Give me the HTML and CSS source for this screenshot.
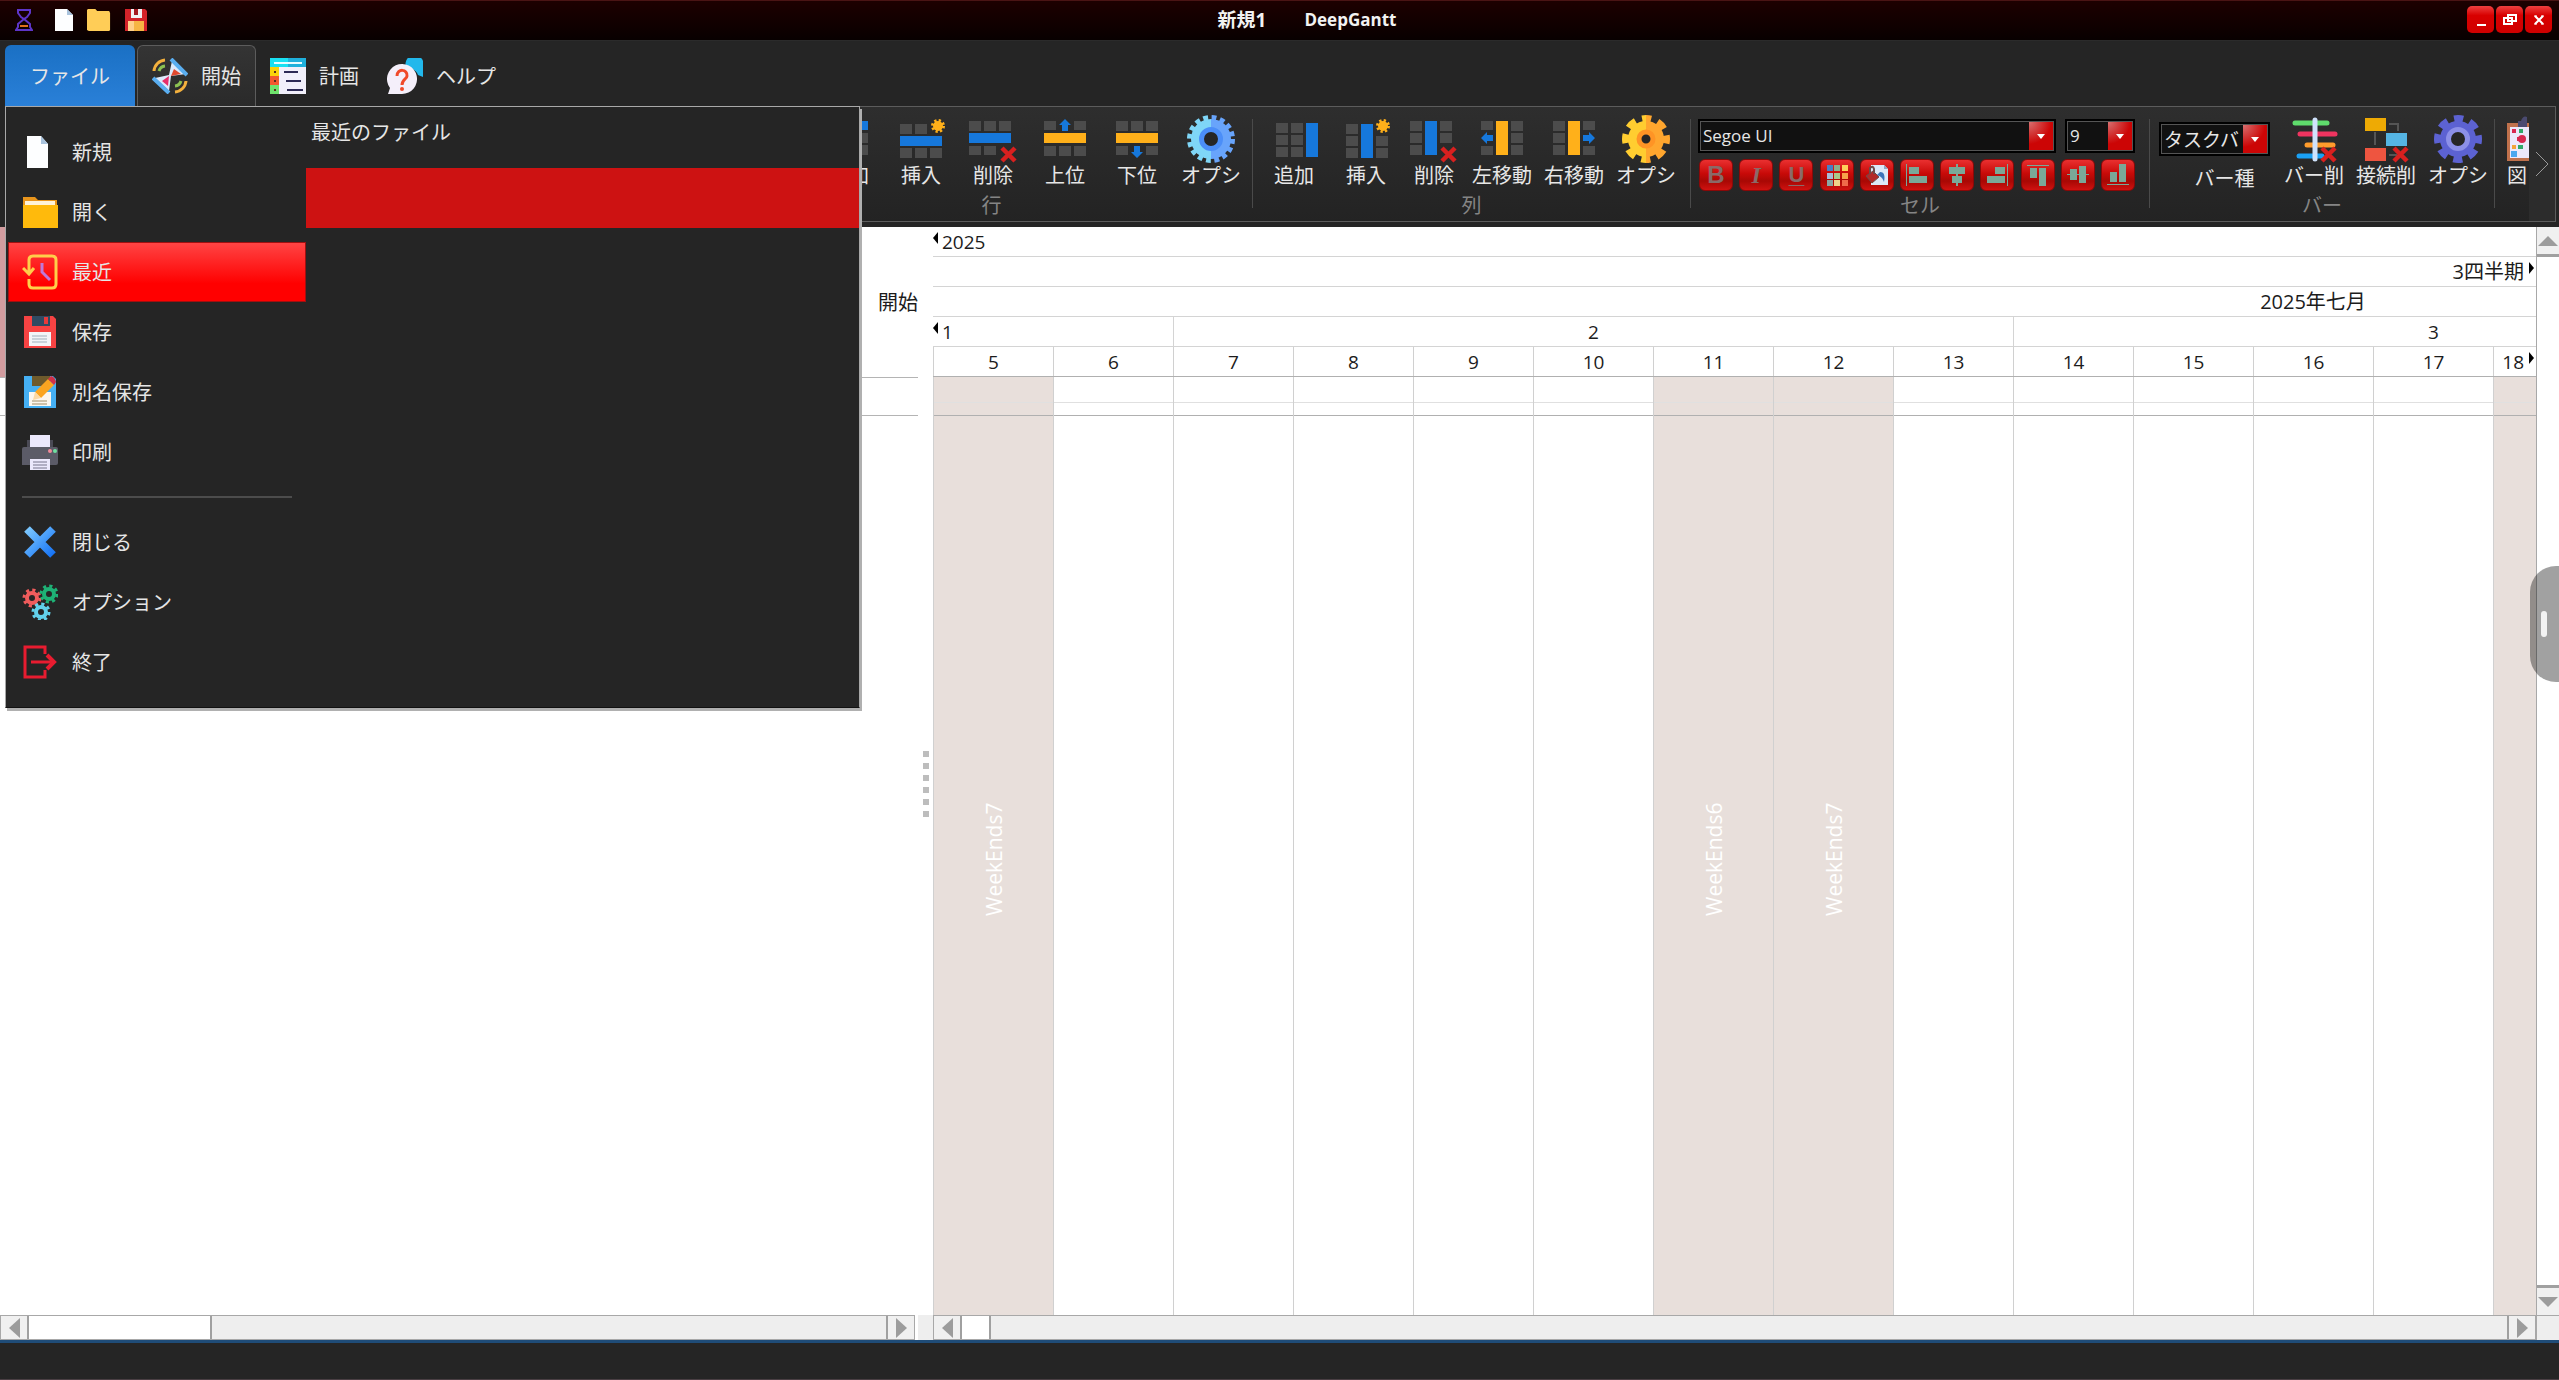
FILE: index.html
```html
<!DOCTYPE html>
<html lang="ja">
<head>
  <meta charset="UTF-8" />
  <meta name="viewport" content="width=device-width, initial-scale=1.0" />
  <title>新規1 DeepGantt</title>
  <link rel="stylesheet" href="styles.css">
</head>
<body>
  <!-- shared icon parts -->
  <svg class="defs" width="0" height="0" aria-hidden="true">
    <defs>
      <linearGradient id="g-blue"><stop offset=".5" stop-color="#7fd6f7"/><stop offset=".5" stop-color="#68a4fb"/></linearGradient>
      <linearGradient id="g-gold"><stop offset=".5" stop-color="#ffcd30"/><stop offset=".5" stop-color="#ffa62e"/></linearGradient>
      <linearGradient id="g-x" x1="0" y1="0" x2="1" y2="1"><stop offset="0" stop-color="#7cc8ff"/><stop offset="1" stop-color="#1673f5"/></linearGradient>
      <linearGradient id="g-cyan"><stop offset=".5" stop-color="#19e0f2"/><stop offset=".5" stop-color="#1fb0dc"/></linearGradient>
      <g id="star"><circle cx="7" cy="7" r="5" fill="#ffb01a"/><circle cx="7" cy="7" r="5.5" fill="none" stroke="#ffb01a" stroke-width="3" stroke-dasharray="2.2 2.12"/></g>
      <path id="cross" d="M2 2 15 15M15 2 2 15" stroke="#d8201f" stroke-width="4.5" fill="none"/>
      <path id="arrow" d="M6 0 12 6H9V12H3V6H0Z" fill="#1678dc"/>
      <path id="cells" d="M0 0h12v10H0zM15 0h12v10H15zM30 0h12v10H30z" fill="#4c4c4c"/>
      <path id="cells-v" d="M0 0h12v10H0zM0 12h12v10H0zM0 24h12v10H0z" fill="#4c4c4c"/>
    </defs>
  </svg>

  <header class="titlebar">
    <div class="quick">
      <svg width="18" height="22" viewBox="0 0 18 22" fill="none" stroke="#5d35c8" stroke-width="2"><path d="M3 1H15V4L12 8 9 10 6 8 3 4ZM9 10 15 15V18L17 21H1L3 18V15Z"/><path d="M5 17H13" stroke="#e0701c"/></svg>
      <button aria-label="新規"><svg width="18" height="22" viewBox="0 0 18 22"><path d="M0 0H12L18 6V22H0Z" fill="#fdfeff"/><path d="M12 0 18 6H12Z" fill="#a9c3dd"/></svg></button>
      <button aria-label="開く"><svg width="24" height="22" viewBox="0 0 26 22" preserveAspectRatio="none"><path d="M1 0H9L11 2H24L25 4V21L24 22H2L0 21V1Z" fill="#ffcd57"/></svg></button>
      <button aria-label="保存"><svg width="22" height="22" viewBox="0 0 22 22"><path d="M0 0H20L22 2V22H0Z" fill="#d3232a"/><path d="M6 0H17V9H6Z" fill="#f1f1f4"/><path d="M9 0H13V6H9Z" fill="#a51b22"/><path d="M3 12H19V22H3Z" fill="#f6b544"/><path d="M3 12H9V22H3Z" fill="#ffd08a"/></svg></button>
    </div>
    <h1 class="title"><span class="doc">新規1</span><span>DeepGantt</span></h1>
    <div class="winbtns">
      <button aria-label="最小化"><svg width="14" height="14" viewBox="0 0 14 14"><path d="M3 12H12" stroke="#fff" stroke-width="2"/></svg></button>
      <button aria-label="元に戻す"><svg width="14" height="14" viewBox="0 0 14 14" fill="none" stroke="#fff" stroke-width="2"><path d="M5 2H13V8H5ZM1 5H9V11H1Z"/></svg></button>
      <button aria-label="閉じる"><svg width="14" height="14" viewBox="0 0 14 14"><path d="M3 3 11 11M11 3 3 11" stroke="#fff" stroke-width="2"/><path d="M2 3h3M9 3h3M2 11h3M9 11h3" stroke="#fff" stroke-width="1"/></svg></button>
    </div>
  </header>

  <nav class="tabs">
    <button class="tab tab-file">ファイル</button>
    <button class="tab tab-active">
      <svg width="36" height="36" viewBox="0 0 36 36" fill="none"><g stroke-width="3"><path d="M2 13A12 12 0 0 1 13 2" stroke="#f3b03d"/><path d="M7 13A7 7 0 0 1 13 8" stroke="#8cc152"/><path d="M34 23A12 12 0 0 1 23 34" stroke="#f3b03d"/><path d="M29 23A7 7 0 0 1 23 28" stroke="#8cc152"/></g><path d="M20 3 34 16 19 18 17 33 3 20 17 17Z" fill="#dceafc"/><path d="M22 11 29 16 19 18Z" fill="#e2492f"/><path d="M10 23 17 18 16 28Z" fill="#e62e6b"/><path d="M19 1 35 17M1 20 17 35" stroke="#5aaef0" stroke-width="4"/></svg>
      開始
    </button>
    <button class="tab">
      <svg width="36" height="36" viewBox="0 0 36 36"><path d="M0 0H36V36H0Z" fill="#f1effa"/><path d="M0 0H36V9H0Z" fill="url(#g-cyan)"/><path d="M4 5H32" stroke="#e8fbff" stroke-width="2"/><path d="M0 9H9V18H0Z" fill="#fbd30b"/><path d="M0 18H9V27H0Z" fill="#f2582f"/><path d="M0 27H9V36H0Z" fill="#6fe36d"/><path d="M14 14H28M16 23H31M17 32H33" stroke="#2d2a55" stroke-width="2"/><path d="M4 14H6M4 23H6M4 32H6" stroke="#5a2a20" stroke-width="2"/></svg>
      計画
    </button>
    <button class="tab">
      <svg width="36" height="36" viewBox="0 0 36 36"><path d="M36 19V9A9 9 0 1 0 19 9C24 9 30 13 31 17Z" fill="#22b8ec"/><path d="M1 36 3 30A15 15 0 1 1 15 36Z" fill="#f4effa"/><path d="M10 18C10 10 21 11 20 18 20 21 15 21 15 27" fill="none" stroke="#f04a2a" stroke-width="3"/><circle cx="15" cy="31" r="2" fill="#f04a2a"/></svg>
      ヘルプ
    </button>
  </nav>

  <section class="ribbon">
    <div class="groups">
      <div class="group group-rows">
        <div class="tools">
          <button class="tool"><svg viewBox="0 0 48 48"><path d="M1 6H43V15H1Z" fill="#1678dc"/><use href="#cells" x="1" y="18"/><use href="#cells" x="1" y="30"/></svg>追加</button>
          <button class="tool"><svg viewBox="0 0 48 48"><path d="M3 9H15V19H3ZM18 9H30V19H18Z" fill="#4c4c4c"/><path d="M3 21H45V31H3Z" fill="#1678dc"/><use href="#cells" x="3" y="33"/><use href="#star" x="34" y="4"/></svg>挿入</button>
          <button class="tool"><svg viewBox="0 0 48 48"><use href="#cells" y="6"/><path d="M0 18H42V28H0Z" fill="#1678dc"/><path d="M0 31H12V40H0ZM15 31H27V40H15Z" fill="#4c4c4c"/><use href="#cross" x="31" y="31"/></svg>削除</button>
          <button class="tool"><svg viewBox="0 0 48 48"><path d="M3 6H15V15H3ZM33 6H45V15H33Z" fill="#4c4c4c"/><path d="M3 18H45V28H3Z" fill="#ffb01a"/><use href="#cells" x="3" y="31"/><use href="#arrow" x="18" y="4"/></svg>上位</button>
          <button class="tool"><svg viewBox="0 0 48 48"><use href="#cells" x="3" y="6"/><path d="M3 18H45V28H3Z" fill="#ffb01a"/><path d="M3 31H15V40H3ZM33 31H45V40H33Z" fill="#4c4c4c"/><use href="#arrow" transform="translate(30 43) rotate(180)"/></svg>下位</button>
          <button class="tool tool-wide"><svg viewBox="0 0 48 48" fill="none"><circle cx="24" cy="24" r="20" fill="url(#g-blue)"/><circle cx="24" cy="24" r="21" stroke="url(#g-blue)" stroke-width="6" stroke-dasharray="4.7 3.546"/><circle cx="24" cy="24" r="9.500" fill="#262626" stroke="#4b8ef8" stroke-width="5"/></svg>オプシ</button>
        </div>
        <div class="group-label">行</div>
      </div>
      <div class="sep"></div>

      <div class="group group-cols">
        <div class="tools">
          <button class="tool"><svg viewBox="0 0 48 48"><use href="#cells-v" x="6" y="8"/><use href="#cells-v" x="21" y="8"/><path d="M36 8H48V42H36Z" fill="#1678dc"/></svg>追加</button>
          <button class="tool"><svg viewBox="0 0 48 48"><use href="#cells-v" x="4" y="9"/><path d="M19 9H31V43H19Z" fill="#1678dc"/><path d="M34 21H46V31H34ZM34 33H46V43H34Z" fill="#4c4c4c"/><use href="#star" x="34" y="4"/></svg>挿入</button>
          <button class="tool tool-narrow"><svg viewBox="0 0 48 48"><use href="#cells-v" y="6"/><path d="M15 6H27V40H15Z" fill="#1678dc"/><path d="M30 6H42V16H30ZM30 18H42V28H30Z" fill="#4c4c4c"/><use href="#cross" x="30" y="31"/></svg>削除</button>
          <button class="tool"><svg viewBox="0 0 48 48"><path d="M3 6H15V15H3ZM3 31H15V40H3Z" fill="#4c4c4c"/><path d="M18 6H30V40H18Z" fill="#ffb01a"/><use href="#cells-v" x="33" y="6"/><use href="#arrow" transform="translate(3 29) rotate(-90)"/></svg>左移動</button>
          <button class="tool"><svg viewBox="0 0 48 48"><use href="#cells-v" x="3" y="6"/><path d="M18 6H30V40H18Z" fill="#ffb01a"/><path d="M33 6H45V15H33ZM33 31H45V40H33Z" fill="#4c4c4c"/><use href="#arrow" transform="translate(45 17) rotate(90)"/></svg>右移動</button>
          <button class="tool"><svg viewBox="0 0 48 48" fill="none"><circle cx="24" cy="24" r="18" fill="url(#g-gold)"/><circle cx="24" cy="24" r="20" stroke="url(#g-gold)" stroke-width="8" stroke-dasharray="9 6.708" stroke-dashoffset="4.500"/><circle cx="24" cy="24" r="7" fill="#262626" stroke="#ff9425" stroke-width="5"/></svg>オプシ</button>
        </div>
        <div class="group-label">列</div>
      </div>
      <div class="sep"></div>

      <div class="group group-cell">
        <div class="combos">
          <label class="combo combo-font"><select aria-label="フォント"><option>Segoe UI</option></select><span class="caret"></span></label>
          <label class="combo combo-size"><select aria-label="サイズ"><option>9</option></select><span class="caret"></span></label>
        </div>
        <div class="formats">
          <button class="fmt fmt-b">B</button>
          <button class="fmt fmt-i">I</button>
          <button class="fmt fmt-u">U</button>
          <button class="fmt" aria-label="色"><svg width="24" height="24" viewBox="0 0 24 24"><path d="M2 2h6v6H2z" fill="#4a7fc4"/><path d="M9 2h6v6H9z" fill="#8fb08a"/><path d="M17 2h6v6h-6z" fill="#ffd05a"/><path d="M2 10h6v6H2z" fill="#a9bcd6"/><path d="M9 10h6v6H9z" fill="#a9c98a"/><path d="M17 10h6v6h-6z" fill="#f6a24a"/><path d="M2 17h6v6H2z" fill="#8aa6a4"/><path d="M9 17h6v6H9z" fill="#f0d48a"/><path d="M17 17h6v6h-6z" fill="#ef6a4a"/></svg></button>
          <button class="fmt" aria-label="塗りつぶし"><svg width="24" height="24" viewBox="0 0 24 24"><path d="M6 2H19L23 6V22H6Z" fill="#dce9f7"/><path d="M19 2V6H23" fill="#8fa8c4"/><path d="M15 9C20 9 20 14 19 19 17 13 14 13 12 12Z" fill="#3c74b8"/><path d="M1 13 8 8 14 14 7 20Z" fill="#b22a28" stroke="#6f4a48"/><path d="M5 11V5Q8 2 9 6V11" fill="none" stroke="#6f4a48" stroke-width="2"/></svg></button>
          <button class="fmt" aria-label="左揃え"><svg width="24" height="24" viewBox="0 0 24 24" fill="#7aa898"><path d="M1 1h1v22H1zM4 4h10v7H4zM4 13h18v7H4z"/></svg></button>
          <button class="fmt" aria-label="中央揃え"><svg width="24" height="24" viewBox="0 0 24 24" fill="#7aa898"><path d="M11 1h2v22h-2zM4 4h16v7H4zM7 13h10v7H7z"/></svg></button>
          <button class="fmt" aria-label="右揃え"><svg width="24" height="24" viewBox="0 0 24 24" fill="#7aa898"><path d="M22 1h1v22h-1zM10 4h10v7H10zM2 13h18v7H2z"/></svg></button>
          <button class="fmt" aria-label="上揃え"><svg width="24" height="24" viewBox="0 0 24 24" fill="#7aa898"><path d="M1 2h22v1H1zM4 5h7v10H4zM13 5h7v18h-7z"/></svg></button>
          <button class="fmt" aria-label="上下中央揃え"><svg width="24" height="24" viewBox="0 0 24 24" fill="#7aa898"><path d="M1 11h22v1H1zM4 6h7v11H4zM13 3h7v17h-7z"/></svg></button>
          <button class="fmt" aria-label="下揃え"><svg width="24" height="24" viewBox="0 0 24 24" fill="#7aa898"><path d="M1 21h22v1H1zM4 9h7v10H4zM13 1h7v18h-7z"/></svg></button>
        </div>
        <div class="group-label">セル</div>
      </div>
      <div class="sep"></div>

      <div class="group group-bar">
        <div class="tools">
          <div class="bar-type">
            <div class="combo"><select id="bar-type"><option>タスクバ</option></select><span class="caret"></span></div>
            <label for="bar-type">バー種</label>
          </div>
          <button class="tool"><svg viewBox="0 0 48 48" fill="none" stroke-width="5" stroke-linecap="round"><path d="M5 8H37" stroke="#5fdc6c"/><path d="M10 19H45" stroke="#ef3460"/><path d="M17 30H43" stroke="#ff9c2c"/><path d="M9 41H32" stroke="#1aa0f4"/><path d="M25 5V44" stroke="#cfe2fb"/><use href="#cross" x="30" y="31" stroke-linecap="butt"/></svg>バー削</button>
          <button class="tool"><svg viewBox="0 0 48 48"><path d="M27 9H36V16M13 30V17M27 40H35" fill="none" stroke="#555" stroke-width="2"/><path d="M3 3H24V16H3Z" fill="#eeaa04"/><path d="M24 18H45V31H24Z" fill="#55b5e4"/><path d="M3 33H24V46H3Z" fill="#ee5540"/><use href="#cross" x="30" y="31"/></svg>接続削</button>
          <button class="tool"><svg viewBox="0 0 48 48" fill="none"><circle cx="24" cy="24" r="18" fill="#5c62d2"/><circle cx="24" cy="24" r="20" stroke="#5c62d2" stroke-width="8" stroke-dasharray="9 6.708" stroke-dashoffset="4.500"/><circle cx="24" cy="24" r="9.500" fill="#262626" stroke="#8c90e8" stroke-width="5"/></svg>オプシ</button>
        </div>
        <div class="group-label">バー</div>
      </div>
      <div class="sep"></div>

      <div class="group group-figure">
        <button class="tool"><svg viewBox="0 0 48 48"><path d="M0 8H36V46H0Z" fill="#c0714c"/><path d="M3 12H33V43H3Z" fill="#ece8fa"/><path d="M11 10V6H14Q16 0 20 2V12H11Z" fill="#4a4a70"/><path d="M5 14h4v4H5zM10 22h4v4h-4z" fill="#d92850"/><path d="M12 14h4v4h-4z" fill="#30a868"/><circle cx="15" cy="24" r="4" fill="#d92850"/><path d="M5 30h4v4H5z" fill="#f2a43a"/><path d="M11 30h5v4h-5z" fill="#30a868"/><path d="M4 36h6v6H4z" fill="#4ba7ee"/></svg>図</button>
      </div>
    </div>
    <button class="ribbon-next" aria-label="次へ"><svg width="14" height="26" viewBox="0 0 14 26" fill="none" stroke="#999" stroke-width="1"><path d="M1 1 13 13 1 25"/></svg></button>
  </section>

  <main class="workspace">
    <section class="pane">
      <table class="tasks">
        <thead><tr><th class="col-mark"></th><th class="col-start">開始</th></tr></thead>
        <tbody><tr><td></td><td></td></tr></tbody>
      </table>
      <div class="hscroll">
        <button class="sb-btn" aria-label="左へ"><i class="tri tri-left"></i></button>
        <div class="sb-track"><div class="sb-thumb thumb-pane"></div></div>
        <button class="sb-btn" aria-label="右へ"><i class="tri tri-right"></i></button>
      </div>
    </section>

    <div class="splitter"><i></i><i></i><i></i><i></i><i></i><i></i></div>

    <section class="chart">
      <div class="scale"><svg class="mark" width="5" height="12" viewBox="0 0 5 12"><path d="M5 0V12L0 6Z"/></svg>2025</div>
      <div class="scale scale-quarter">3四半期<svg class="mark" width="5" height="12" viewBox="0 0 5 12"><path d="M0 0V12L5 6Z"/></svg></div>
      <div class="scale"><div class="month">2025年七月</div></div>
      <div class="scale weeks">
        <div class="week-first"><svg class="mark" width="5" height="12" viewBox="0 0 5 12"><path d="M5 0V12L0 6Z"/></svg>1</div>
        <div class="week">2</div>
        <div class="week">3</div>
      </div>
      <div class="scale days">
        <div>5</div><div>6</div><div>7</div><div>8</div><div>9</div><div>10</div><div>11</div><div>12</div><div>13</div><div>14</div><div>15</div><div>16</div><div>17</div><div>18<svg class="mark" width="5" height="12" viewBox="0 0 5 12"><path d="M0 0V12L5 6Z"/></svg></div>
      </div>
      <div class="days grid">
        <div class="off"><span>WeekEnds7</span></div><div></div><div></div><div></div><div></div><div></div>
        <div class="off"><span>WeekEnds6</span></div><div class="off"><span>WeekEnds7</span></div>
        <div></div><div></div><div></div><div></div><div></div><div class="off"></div>
      </div>
      <div class="hscroll">
        <button class="sb-btn" aria-label="左へ"><i class="tri tri-left"></i></button>
        <div class="sb-track"><div class="sb-thumb thumb-chart"></div></div>
        <button class="sb-btn" aria-label="右へ"><i class="tri tri-right"></i></button>
      </div>
    </section>

    <div class="vscroll">
      <button class="sb-btn" aria-label="上へ"><i class="tri tri-up"></i></button>
      <div class="sb-vtrack"></div>
      <button class="sb-btn" aria-label="下へ"><i class="tri tri-down"></i></button>
      <div class="sb-corner"></div>
    </div>
  </main>

  <footer class="status"></footer>

  <button class="edge-handle" aria-label="パネルを開く"><i></i></button>

  <div class="filemenu">
    <div class="menu-list">
      <button class="item"><svg viewBox="0 0 36 36"><path d="M5 2H19L26 10V34H5Z" fill="#fdfeff"/><path d="M19 2 26 10H19Z" fill="#a9c3dd"/></svg>新規</button>
      <button class="item"><svg viewBox="0 0 36 36"><path d="M1 3H13L16 6H35V14H1Z" fill="#e8951c"/><path d="M3 7H33V14H3Z" fill="#fff3d8"/><path d="M1 11H36V34H1Z" fill="#ffba0c"/></svg>開く</button>
      <button class="item selected"><svg viewBox="0 0 36 36" fill="none" stroke="#ffce4a" stroke-width="3"><path d="M7 18V6Q7 2 11 2H30Q34 2 34 6V30Q34 34 30 34H11Q7 34 7 30V25M1 14 7 20 12 14"/><path d="M20 9V18L28 26" stroke="#c078d8"/></svg>最近</button>
      <button class="item"><svg viewBox="0 0 36 36"><path d="M2 2H31L34 5V34H2Z" fill="#f74343"/><path d="M10 2H28V12H10Z" fill="#2f4a62"/><path d="M22 3H26V10H22Z" fill="#e83a3a"/><path d="M7 18H29V32H7Z" fill="#f2f4f8"/><path d="M10 22H25M10 25H25M10 28H25" stroke="#9fb0bd"/></svg>保存</button>
      <button class="item"><svg viewBox="0 0 36 36"><path d="M2 2H31L34 5V34H2Z" fill="#45b0f4"/><path d="M10 2H28V12H10Z" fill="#6e5a2c"/><path d="M7 18H29V32H7Z" fill="#fbf6ee"/><path d="M10 27H25M10 30H25" stroke="#a08c66"/><path d="M13 18 26 5 32 11 19 24Z" fill="#fba520"/><path d="M26 5 29 2Q33 3 34 8L32 11Z" fill="#d33046"/><path d="M13 18 19 24 11 26Z" fill="#fbd9a4"/></svg>別名保存</button>
      <button class="item"><svg viewBox="0 0 36 36"><path d="M5 6H31V14H5Z" fill="#4a4a55"/><path d="M0 15Q0 13 2 13H34Q36 13 36 15V29Q36 31 34 31H0Z" fill="#5b5b67"/><path d="M8 1H28V13H8ZM8 25H28V36H8Z" fill="#ebe8fc"/><path d="M11 28H25M11 31H25M11 34H25" stroke="#77748c"/><circle cx="28" cy="17" r="2" fill="#f28a9a"/><circle cx="33" cy="17" r="2" fill="#6fe0a0"/></svg>印刷</button>
      <hr>
      <button class="item"><svg viewBox="0 0 36 36"><path d="M5 5 31 31M31 5 5 31" stroke="url(#g-x)" stroke-width="8"/></svg>閉じる</button>
      <button class="item"><svg viewBox="0 0 36 36" fill="none"><g stroke="#f05c5c"><circle cx="10" cy="14" r="5" stroke-width="4"/><circle cx="10" cy="14" r="8" stroke-width="3" stroke-dasharray="3.142 3.142"/></g><g stroke="#1eb276"><circle cx="27" cy="10" r="5" stroke-width="4"/><circle cx="27" cy="10" r="8" stroke-width="3" stroke-dasharray="3.142 3.142"/></g><g stroke="#62d2ec"><circle cx="19" cy="28" r="5" stroke-width="4"/><circle cx="19" cy="28" r="8" stroke-width="3" stroke-dasharray="3.142 3.142"/></g></svg>オプション</button>
      <button class="item"><svg viewBox="0 0 36 36" fill="none" stroke="#e81c30" stroke-width="3"><path d="M23 10V3H3V33H23V26M9 18H32"/><path d="M25 11 32 18 25 25" stroke-width="4"/></svg>終了</button>
    </div>
    <div class="recent">
      <h2>最近のファイル</h2>
      <button class="recent-item" aria-label="ファイル 1"></button>
    </div>
  </div>
</body>
</html>
```
FILE: styles.css
```css
* {
  box-sizing: border-box;
}
body {
  margin: 0;
  height: 100vh;
  display: flex;
  flex-direction: column;
  position: relative;
  overflow: hidden;
  background: #252525;
  color: #e6e6e6;
  font: 20px/24px "Noto Sans CJK JP", sans-serif;
}
button, select {
  font: inherit;
  color: inherit;
  background: none;
  border: 0;
  margin: 0;
  padding: 0;
}
svg {
  display: block;
  flex: none;
}
.defs {
  position: absolute;
}

/* title bar */
.titlebar {
  flex: 0 0 41px;
  display: flex;
  align-items: center;
  padding: 0 7px 2px 15px;
  border-top: 1px solid #4a1414;
  border-bottom: 1px solid #2b2b2b;
  background: linear-gradient(to bottom, #1d0000, #080000);
}
.quick {
  display: flex;
  gap: 14px;
}
.quick > svg {
  margin-right: 8px;
}
.title {
  flex: 1;
  display: flex;
  justify-content: center;
  gap: 38px;
  margin: 0;
  font: bold 17px/24px "Open Sans", "Noto Sans CJK JP", sans-serif;
  color: #f2f2f2;
}
.title .doc {
  font-size: 19px;
}
.winbtns {
  display: flex;
  gap: 2px;
}
.winbtns button {
  display: grid;
  place-items: center;
  width: 27px;
  height: 27px;
  border-radius: 5px;
  background: linear-gradient(to bottom, #ee4040, #d80000 35%, #d00000);
}

/* tabs */
.tabs {
  flex: 0 0 65px;
  display: flex;
  padding: 4px 5px 0;
}
.tab {
  display: flex;
  align-items: center;
  gap: 13px;
  padding: 0 14px;
  border-radius: 6px 6px 0 0;
}
.tab-file {
  width: 130px;
  margin-right: 2px;
  justify-content: center;
  background: linear-gradient(to bottom, #1a70c4, #2a80d8);
}
.tab-active {
  background: linear-gradient(to bottom, #343434, #2a2a2a);
  border: 1px solid #5c5c5c;
  border-bottom: 0;
}

/* ribbon */
.ribbon {
  flex: 0 0 116px;
  display: flex;
  margin: 0 3px 5px 5px;
  border: 1px solid #5c5c5c;
  background: linear-gradient(to bottom, #2e2e2e, #232323);
}
.groups {
  flex: 1;
  min-width: 0;
  display: flex;
  overflow: hidden;
  padding-left: 725px;
}
.group {
  flex: none;
  display: flex;
  flex-direction: column;
  padding: 8px 0 4px;
}
.group-rows {
  width: 521px;
}
.group-rows .tools {
  justify-content: flex-end;
  padding-right: 3px;
}
.group-cols .tools {
  padding: 0 8px 0 5px;
}
.group-cell {
  width: 458px;
  padding-top: 12px;
}
.group-bar .tools {
  padding-left: 9px;
}
.group-figure {
  padding-left: 12px;
}
.group-figure .tool {
  align-items: flex-start;
}
.sep {
  flex: 0 0 1px;
  margin: 12px 0 13px;
  background: #4a4a4a;
}
.tools {
  display: flex;
}
.tool {
  flex: none;
  width: 72px;
  display: flex;
  flex-direction: column;
  align-items: center;
}
.tool svg {
  width: 48px;
  height: 48px;
}
.tool-wide {
  width: 76px;
}
.tool-narrow {
  width: 64px;
}
.group-label {
  margin-top: auto;
  text-align: center;
  color: #858585;
}
.combos {
  display: flex;
  gap: 9px;
  padding: 0 14px 0 7px;
}
.combo {
  display: flex;
  height: 34px;
  border: 2px solid #000;
  outline: 1px solid #555;
  outline-offset: -3px;
  padding: 1px;
  background: #111;
  font-size: 19px;
}
.combo select {
  flex: 1;
  min-width: 0;
  appearance: none;
  padding-left: 2px;
  line-height: 24px;
}
.combo-font, .combo-size {
  font: 17px/24px "Open Sans", "Noto Sans CJK JP", sans-serif;
}
.combo-font {
  flex: 1;
}
.combo-size {
  width: 70px;
}
.caret {
  flex: 0 0 24px;
  display: grid;
  place-items: center;
  background: radial-gradient(circle at 0 0, #d87070, #cc0505 60%);
}
.caret::before {
  content: '';
  border: 4px solid transparent;
  border-top: 5px solid #fff;
  border-bottom: 0;
}
.formats {
  display: flex;
  justify-content: space-between;
  padding: 6px 14px 0 8px;
}
.fmt {
  display: grid;
  place-items: center;
  width: 34px;
  height: 32px;
  border-radius: 6px;
  border: 1px solid #8a0808;
  background: linear-gradient(to bottom, #ea3030, #c80a08 45%, #a80804 70%, #d01210);
  color: #8a6a68;
}
.fmt-b {
  font: bold 24px/24px "Liberation Sans", sans-serif;
}
.fmt-i {
  font: italic bold 24px/24px "Liberation Serif", serif;
}
.fmt-u {
  font: bold 22px/22px "Liberation Sans", sans-serif;
  text-decoration: underline;
  text-decoration-thickness: 1px;
  text-underline-offset: 3px;
}
.bar-type {
  width: 111px;
  margin: 7px 8px 0 0;
  text-align: center;
}
.bar-type label {
  display: block;
  padding: 10px 0 0 20px;
}
.ribbon-next {
  flex: 0 0 26px;
  display: grid;
  place-items: center;
  background: #2c2c2c;
}

/* workspace */
.workspace {
  flex: 1;
  min-height: 0;
  display: flex;
  background: #fff;
  color: #1c1c1c;
}
.pane {
  flex: 0 0 918px;
  display: flex;
  flex-direction: column;
  justify-content: space-between;
}
.tasks {
  width: 100%;
  border-collapse: collapse;
}
.tasks th, .tasks td {
  padding: 0;
  border-bottom: 1px solid #b4b4b4;
}
.tasks th {
  height: 150px;
  font-weight: normal;
  text-align: right;
}
.tasks td {
  height: 38px;
}
.col-mark {
  width: 300px;
  background: #d29c9f;
}
.splitter {
  flex: 0 0 15px;
  display: flex;
  flex-direction: column;
  align-items: center;
  justify-content: center;
  gap: 6px;
  background: linear-gradient(#eee, #eee) bottom / 100% 25px no-repeat;
}
.splitter i {
  width: 6px;
  height: 6px;
  background: #bdbdbd;
}
.chart {
  flex: 1;
  min-width: 0;
  display: flex;
  flex-direction: column;
}
.scale {
  flex: 0 0 30px;
  display: flex;
  overflow: hidden;
  border-bottom: 1px solid #d4d4d4;
  font: 19px/30px "Open Sans", "Noto Sans CJK JP", sans-serif;
}
.mark {
  margin: 5px 4px 0 0;
}
.scale-quarter {
  justify-content: flex-end;
  font-size: 20px;
}
.scale-quarter .mark, .days .mark {
  margin: 5px 2px 0 5px;
}
.month {
  flex: 0 0 3720px;
  margin-left: -480px;
  text-align: center;
  font-size: 20px;
}
.week-first {
  flex: 0 0 240px;
  display: flex;
}
.week {
  flex: 0 0 840px;
  text-align: center;
  border-left: 1px solid #d4d4d4;
}
.days {
  display: grid;
  grid-template-columns: repeat(13, 120px) 1fr;
}
.days > div {
  display: flex;
  justify-content: center;
  border-left: 1px solid #d0d0d0;
}
.scale.days {
  border-bottom-color: #b0b0b0;
}
.scale.days > div:last-child {
  justify-content: flex-end;
}
.grid {
  flex: 1;
}
.grid > div {
  flex-direction: column;
  justify-content: flex-start;
  align-items: center;
}
.grid > div::before {
  content: '';
  align-self: stretch;
  flex: 0 0 38px;
  border-bottom: 1px solid #b0b0b0;
  background: linear-gradient(#e0e0e0, #e0e0e0) 0 25px / 100% 1px no-repeat;
}
.grid .off {
  background: #e8dfdb;
}
.grid span {
  flex: 1;
  writing-mode: vertical-rl;
  transform: rotate(180deg);
  text-align: center;
  padding-top: 12px;
  font: 21px/24px "Open Sans", sans-serif;
  color: #fff;
}

/* scrollbars */
.hscroll {
  flex: 0 0 25px;
  display: flex;
  border: 1px solid #a8a8a8;
  background: #eee;
}
.pane .hscroll {
  margin-right: 3px;
}
.sb-btn {
  flex: 0 0 26px;
  display: grid;
  place-items: center;
  background: #f0f0f0;
}
.sb-track {
  flex: 1;
  display: flex;
  border: solid #a0a0a0;
  border-width: 0 2px;
}
.sb-thumb {
  background: #fff;
  border-right: 2px solid #a0a0a0;
}
.thumb-pane {
  width: 183px;
}
.thumb-chart {
  width: 29px;
}
.tri {
  border: 10px solid transparent;
}
.tri-left {
  border-width: 10px 11px 10px 0;
  border-right-color: #9c9c9c;
}
.tri-right {
  border-width: 10px 0 10px 11px;
  border-left-color: #9c9c9c;
}
.tri-up {
  border-top: 0;
  border-bottom-color: #9c9c9c;
}
.tri-down {
  border-bottom: 0;
  border-top-color: #9c9c9c;
}
.vscroll {
  flex: 0 0 23px;
  display: flex;
  flex-direction: column;
  border-left: 1px solid #a8a8a8;
}
.vscroll .sb-btn {
  flex-basis: 27px;
}
.sb-vtrack {
  flex: 1;
  border: solid #a0a0a0;
  border-width: 3px 0;
}
.sb-corner {
  flex: 0 0 25px;
  border-top: 1px solid #a8a8a8;
  background: #eee;
}
.status {
  flex: 0 0 40px;
  border-top: 3px solid #1f4c78;
  border-bottom: 1px solid #4a3f44;
}

/* slide-out handle over the right edge */
.edge-handle {
  position: absolute;
  top: 566px;
  right: 0;
  width: 29px;
  height: 116px;
  padding-left: 11px;
  border-radius: 26px 0 0 26px;
  background: rgba(0, 0, 0, 0.37);
}
.edge-handle i {
  display: block;
  width: 6px;
  height: 26px;
  border-radius: 3px;
  background: #f2f2f2;
}

/* file menu */
.filemenu {
  position: absolute;
  top: 106px;
  left: 5px;
  width: 855px;
  height: 602px;
  display: flex;
  border: 1px solid #a8a8a8;
  border-bottom-color: #111;
  background: #252525;
  box-shadow: 2px 3px 0 #b0b0b0;
}
.menu-list {
  flex: 0 0 300px;
  padding: 15px 0 0 2px;
}
.item {
  display: flex;
  align-items: center;
  gap: 14px;
  width: 100%;
  height: 60px;
  padding-left: 14px;
}
.item svg {
  width: 36px;
  height: 36px;
}
.item.selected {
  border: 1px solid #a01010;
  padding-left: 13px;
  background: linear-gradient(to bottom, #ff4444, #ff0000 70%);
}
.menu-list hr {
  height: 2px;
  margin: 14px;
  border: 0;
  background: #4c4c4c;
}
.recent {
  flex: 1;
}
.recent h2 {
  margin: 13px 0 24px 5px;
  font: inherit;
}
.recent-item {
  display: block;
  width: 100%;
  height: 60px;
  background: #cd1212;
}
```
